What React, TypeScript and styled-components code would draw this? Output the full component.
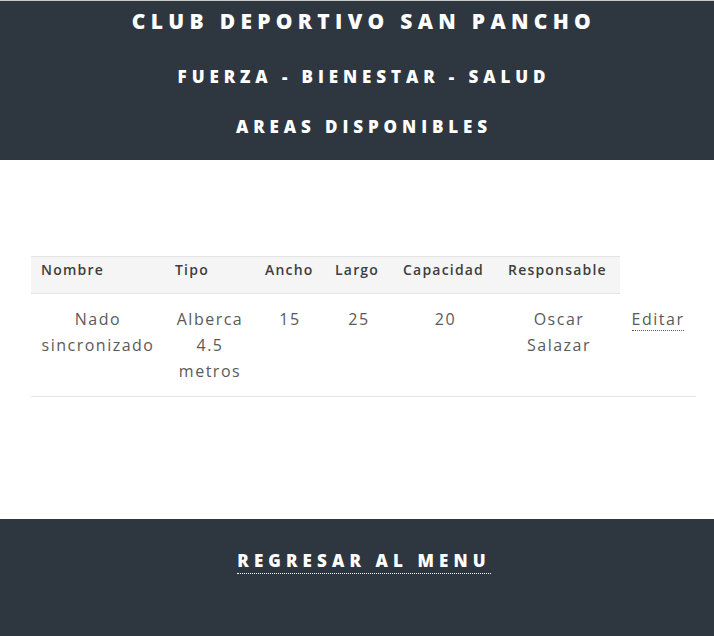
import React from "react";
import styled, { createGlobalStyle } from "styled-components";

const GlobalStyle = createGlobalStyle`
  html, body {
    margin: 0;
    padding: 0;
    background: #ffffff;
    font-family: "Open Sans", "Liberation Sans", sans-serif;
  }
`;

const areas = [
  {
    id: 1,
    nombre: ["Nado", "sincronizado"],
    tipo: ["Alberca", "4.5", "metros"],
    ancho: 15,
    largo: 25,
    capacidad: 20,
    responsable: ["Oscar", "Salazar"],
  },
];

const Lines: React.FC<{ parts: string[] }> = ({ parts }) => (
  <>
    {parts.map((p, i) => (
      <React.Fragment key={i}>
        {i > 0 && <br />}
        {p}
      </React.Fragment>
    ))}
  </>
);

export default function App() {
  return (
    <>
      <GlobalStyle />
      <S.Page>
        <S.Header>
          <S.Title>Club Deportivo San Pancho</S.Title>
          <S.Subtitle>Fuerza - Bienestar - Salud</S.Subtitle>
          <S.Subtitle $last>Areas Disponibles</S.Subtitle>
        </S.Header>
        <S.Main>
          <S.Table>
            <thead>
              <tr>
                <S.Th $w={134}>Nombre</S.Th>
                <S.Th $w={90}>Tipo</S.Th>
                <S.Th $w={70}>Ancho</S.Th>
                <S.Th $w={68}>Largo</S.Th>
                <S.Th $w={105}>Capacidad</S.Th>
                <S.Th $w={122}>Responsable</S.Th>
              </tr>
            </thead>
            <tbody>
              {areas.map(a => (
                <tr key={a.id}>
                  <S.Td><Lines parts={a.nombre} /></S.Td>
                  <S.Td><Lines parts={a.tipo} /></S.Td>
                  <S.Td>{a.ancho}</S.Td>
                  <S.Td>{a.largo}</S.Td>
                  <S.Td>{a.capacidad}</S.Td>
                  <S.Td><Lines parts={a.responsable} /></S.Td>
                  <S.Td><S.Link href="#">Editar</S.Link></S.Td>
                </tr>
              ))}
            </tbody>
          </S.Table>
        </S.Main>
        <S.Footer>
          <S.BackLink href="#">Regresar al menu</S.BackLink>
        </S.Footer>
      </S.Page>
    </>
  );
}

const S = {
  Page: styled.div`
    display: flex;
    flex-direction: column;
    min-height: 636px;
  `,
  Header: styled.header`
    background: #2e3640;
    border-top: 1px solid #c9c9c9;
    height: 160px;
    display: flex;
    flex-direction: column;
    align-items: center;
    padding: 6px 0 0 14px;
    box-sizing: border-box;
  `,
  Title: styled.h1`
    margin: 0;
    color: #ffffff;
    font-size: 21px;
    font-weight: 800;
    letter-spacing: 5.3px;
    text-transform: uppercase;
    line-height: 28px;
  `,
  Subtitle: styled.h2<{ $last?: boolean }>`
    margin: ${p => (p.$last ? "22px" : "28px")} 0 0;
    color: #ffffff;
    font-size: 17px;
    font-weight: 800;
    letter-spacing: 4.9px;
    text-transform: uppercase;
    line-height: 28px;
  `,
  Main: styled.main`
    flex: 1;
    padding: 96px 18px 122px 31px;
  `,
  Table: styled.table`
    width: 100%;
    border-collapse: collapse;
    border-spacing: 0;
  `,
  Th: styled.th<{ $w: number }>`
    width: ${p => p.$w}px;
    background: #f5f5f5;
    border-top: 1px solid #e4e4e4;
    border-bottom: 1px solid #e4e4e4;
    padding: 3px 10px 0;
    height: 37px;
    box-sizing: border-box;
    vertical-align: top;
    text-align: left;
    color: #3e3e3e;
    font-size: 14px;
    line-height: 20px;
    font-weight: 600;
    letter-spacing: 1.2px;
    white-space: nowrap;
  `,
  Td: styled.td`
    border-bottom: 1px solid #e4e4e4;
    padding: 12px 4px 12px;
    vertical-align: top;
    text-align: center;
    color: #5a5a5a;
    font-size: 16px;
    line-height: 26px;
    letter-spacing: 1.5px;
  `,
  Link: styled.a`
    color: #5a5a5a;
    text-decoration: none;
    border-bottom: 1px dotted #5a5a5a;
  `,
  Footer: styled.footer`
    background: #2e3640;
    height: 117px;
    display: flex;
    justify-content: center;
    align-items: flex-start;
    padding: 30px 0 0 14px;
    box-sizing: border-box;
  `,
  BackLink: styled.a`
    color: #ffffff;
    text-decoration: none;
    font-size: 17px;
    font-weight: 800;
    letter-spacing: 5.1px;
    text-transform: uppercase;
    line-height: 24px;
    border-bottom: 1px dotted #ffffff;
  `,
};
